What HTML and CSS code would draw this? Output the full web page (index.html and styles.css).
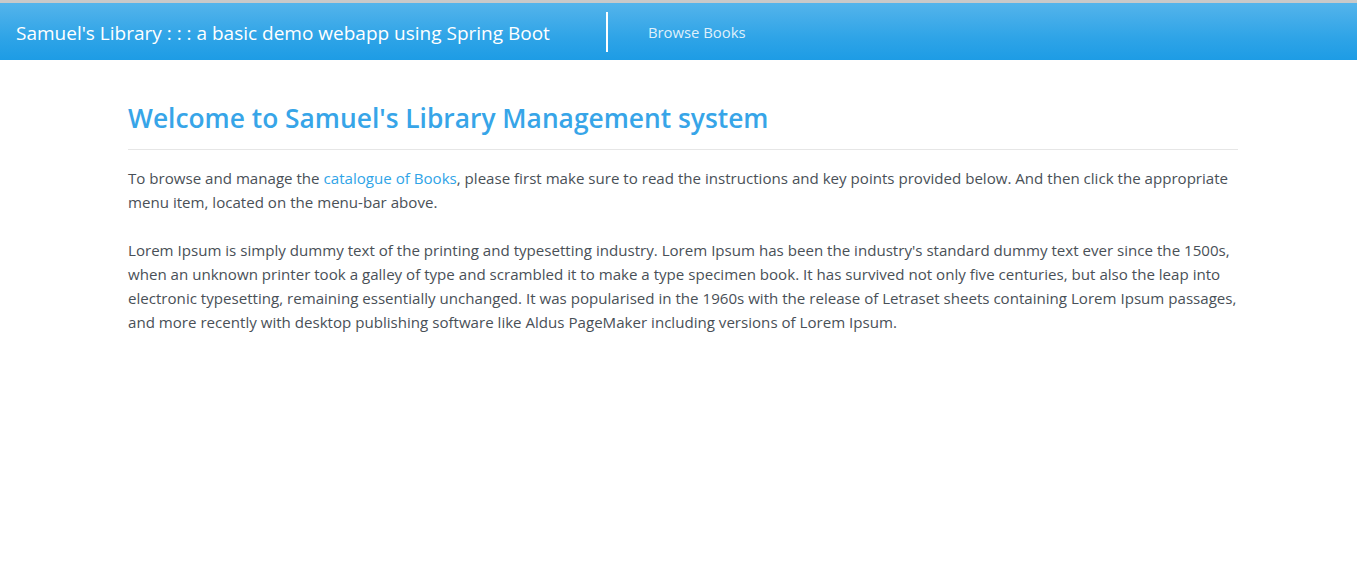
FILE: index.html
```html
<!DOCTYPE html>
<html lang="en">
<head>
<meta charset="utf-8">
<title>Samuel's Library</title>
<link rel="stylesheet" href="styles.css">
</head>
<body>
<header class="topbar">
  <nav class="navbar">
    <a class="brand" href="#">Samuel's Library : : : a basic demo webapp using Spring Boot</a>
    <span class="divider"></span>
    <a class="nav-link" href="#">Browse Books</a>
  </nav>
</header>
<main class="page">
  <div class="container">
    <h1 class="title">Welcome to Samuel's Library Management system</h1>
    <hr class="rule">
    <p class="para">To browse and manage the <a class="link" href="#">catalogue of Books</a>, please first make sure to read the instructions and key points provided below. And then click the appropriate menu item, located on the menu-bar above.</p>
    <p class="para">Lorem Ipsum is simply dummy text of the printing and typesetting industry. Lorem Ipsum has been the industry's standard dummy text ever since the 1500s, when an unknown printer took a galley of type and scrambled it to make a type specimen book. It has survived not only five centuries, but also the leap into electronic typesetting, remaining essentially unchanged. It was popularised in the 1960s with the release of Letraset sheets containing Lorem Ipsum passages, and more recently with desktop publishing software like Aldus PageMaker including versions of Lorem Ipsum.</p>
  </div>
</main>
</body>
</html>
```
FILE: styles.css
```css
html, body {
  margin: 0;
  padding: 0;
  background: #fff;
}
body {
  font-family: "Open Sans", "Noto Sans", sans-serif;
  font-size: 15.1px;
  line-height: 24px;
  color: #495057;
}
.topbar {
  border-top: 3px solid #c9c9c9;
}
.navbar {
  display: flex;
  align-items: center;
  height: 57px;
  padding: 0 0 0 16px;
  background-image: linear-gradient(#54b4eb, #2fa4e7 60%, #1d9ce5);
  box-sizing: border-box;
}
.brand {
  color: #fff;
  text-decoration: none;
  font-size: 19px;
  line-height: 28px;
  white-space: nowrap;
  margin-top: 2px;
}
.divider {
  display: block;
  width: 2px;
  height: 40px;
  background: #fff;
  margin-left: 56px;
  margin-top: 1px;
}
.nav-link {
  color: rgba(255, 255, 255, 0.85);
  text-decoration: none;
  font-size: 14.85px;
  line-height: 22px;
  margin-left: 40px;
  margin-top: 1px;
}
.page {
  padding-left: 9px;
}
.container {
  max-width: 1110px;
  margin: 0 auto;
  padding-top: 42px;
}
.title {
  margin: 0 0 15px;
  font-size: 26.35px;
  line-height: 32px;
  font-weight: 600;
  color: #37a5e8;
}
.rule {
  margin: 0 0 16px;
  border: 0;
  border-top: 1px solid #e6e6e6;
}
.para {
  margin: 0 0 24px;
}
.link {
  color: #2fa4e7;
  text-decoration: none;
}
```
